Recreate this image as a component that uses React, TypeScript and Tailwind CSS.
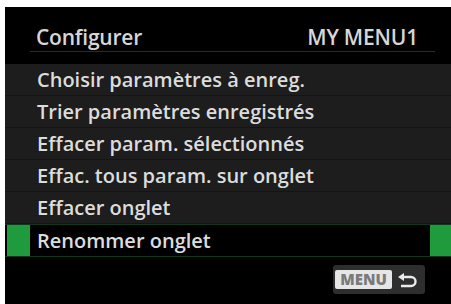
import React from 'react';

const ITEMS = [
    'Choisir paramètres à enreg.',
    'Trier paramètres enregistrés',
    'Effacer param. sélectionnés',
    'Effac. tous param. sur onglet',
    'Effacer onglet',
    'Renommer onglet',
];

const SELECTED = 5;

export default function App() {
    return (
        <div className="w-[451px] h-[304px] bg-white pt-[7px] pl-[5px] overflow-hidden" style={{ fontFamily: '"Open Sans", "Noto Sans", sans-serif' }}>
            <div className="w-full h-full bg-black flex flex-col">
                {/* Header */}
                <div className="h-[45px] mx-[25px] mr-[16px] flex items-end justify-between pb-[3px] border-b border-[#173626] px-[6px]">
                    <span className="text-[21px] leading-none font-semibold text-[#d6d6d6] tracking-[-0.2px]">Configurer</span>
                    <span className="text-[21px] leading-none font-semibold text-[#d6d6d6] mr-[11px] tracking-[-0.2px]">MY MENU1</span>
                </div>

                {/* List */}
                <div className="mt-[12px] flex flex-col">
                    {ITEMS.map((label, i) =>
                        i === SELECTED ? (
                            <div key={i} className="h-[33px] flex items-stretch bg-black border-y border-[#12361f]">
                                <div className="w-[23px] ml-[2px] bg-[#1f9a3c]" />
                                <div className="flex-1 flex items-center pl-[7px] text-[20px] text-[#dcdcdc] font-semibold">
                                    {label}
                                </div>
                                <div className="w-[21px] bg-[#1f9a3c]" />
                            </div>
                        ) : (
                            <div key={i} className="h-[32px] flex items-center pl-[32px] bg-[#1d1d1d] border-b border-[#141414] text-[20px] text-[#dcdcdc] font-semibold">
                                {label}
                            </div>
                        )
                    )}
                </div>

                {/* Footer */}
                <div className="flex-1 flex justify-end items-start pt-[8px] pr-[26px]">
                    <div className="h-[29px] w-[92px] rounded-[3px] bg-[#2e2e2e] flex items-center gap-[5px] pl-[2px]">
                        <span className="h-[19px] w-[57px] bg-[#e6e6e6] rounded-[2px] flex items-center justify-center text-[15px] font-extrabold leading-none text-[#7a7a7a]">
                            MENU
                        </span>
                        <svg width="22" height="16" viewBox="0 0 22 16" fill="none">
                            <path d="M4 5 H14 a4.5 4.5 0 0 1 0 9 H4" stroke="#eaeaea" strokeWidth="2.4" fill="none" />
                            <path d="M1 5 L7 1 L7 9 Z" fill="#eaeaea" />
                        </svg>
                    </div>
                </div>
            </div>
        </div>
    );
}
